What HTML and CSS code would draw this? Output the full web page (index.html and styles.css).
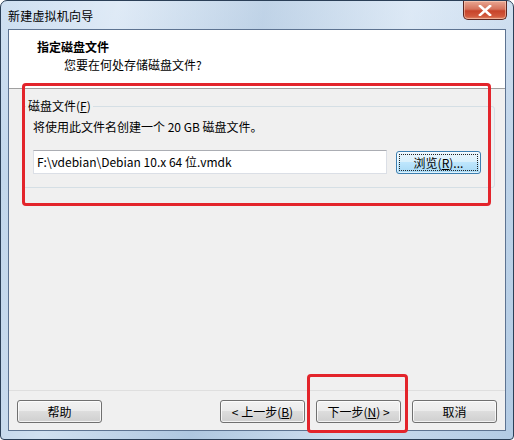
FILE: index.html
```html
<!DOCTYPE html>
<html lang="zh">
<head>
<meta charset="utf-8">
<link rel="stylesheet" href="styles.css">
</head>
<body>
<div class="window">
  <div class="titlebar">
    <span class="title">新建虚拟机向导</span>
    <button class="close" aria-label="关闭">
      <svg width="14" height="11" viewBox="0 0 14 11"><path d="M2 1 L12 10 M12 1 L2 10" stroke="#fff" stroke-width="2.6" stroke-linecap="square" fill="none"/></svg>
    </button>
  </div>
  <div class="client">
    <div class="header">
      <div class="h-title">指定磁盘文件</div>
      <div class="h-sub">您要在何处存储磁盘文件?</div>
    </div>
    <div class="body">
      <fieldset class="group">
        <legend>磁盘文件(<u>F</u>)</legend>
        <p class="desc">将使用此文件名创建一个 20 GB 磁盘文件。</p>
        <div class="row">
          <div class="input">F:\vdebian\Debian 10.x 64 位.vmdk</div>
          <button class="btn focus"><span class="focusring">浏览(<u>R</u>)...</span></button>
        </div>
      </fieldset>
      <div class="mark mark-group"></div>
    </div>
    <div class="footer">
      <button class="btn">帮助</button>
      <div class="spacer"></div>
      <button class="btn">&lt; 上一步(<u>B</u>)</button>
      <button class="btn">下一步(<u>N</u>) &gt;</button>
      <button class="btn">取消</button>
      <div class="mark mark-next"></div>
    </div>
  </div>
</div>
</body>
</html>
```
FILE: styles.css
```css
* { box-sizing: border-box; }
html, body { margin: 0; padding: 0; background: #fff; }
body {
  font-family: "Noto Sans CJK SC", "Noto Sans", sans-serif;
  font-size: 12px;
  color: #000;
}
.window {
  width: 514px;
  height: 440px;
  display: flex;
  flex-direction: column;
  padding: 0 7px 8px 7px;
  border: 1px solid #2b3f57;
  border-radius: 7px 7px 4px 4px;
  background:
    linear-gradient(100deg, rgba(255,255,255,0) 0%, rgba(255,255,255,0.35) 20%, rgba(150,175,200,0.25) 45%, rgba(255,255,255,0.3) 70%, rgba(160,185,210,0.2) 100%),
    linear-gradient(180deg, #cfe0f2 0%, #bcd3ea 40%, #b7cfe8 100%);
}
.titlebar {
  height: 28px;
  display: flex;
  align-items: flex-start;
  position: relative;
}
.title {
  margin-top: 6px;
  margin-left: 0;
  font-size: 12px;
  color: #000;
  letter-spacing: 0.2px;
}
.close {
  margin-left: auto;
  margin-right: -1px;
  width: 44px;
  height: 19px;
  border: 1px solid #5a2520;
  border-top: none;
  border-radius: 0 0 5px 5px;
  background: linear-gradient(180deg, #e9a793 0%, #d5735c 45%, #c7432a 55%, #d2593d 85%, #e08a6c 100%);
  box-shadow: inset 0 0 0 1px rgba(255,220,200,0.5);
  display: flex;
  align-items: center;
  justify-content: center;
  padding: 0;
}
.client {
  flex: 1;
  display: flex;
  flex-direction: column;
  background: #f0f0f0;
  border: 1px solid #5d7391;
}
.header {
  height: 59px;
  background: #fff;
  border-bottom: 1px solid #a0a0a0;
  padding: 8px 0 0 28px;
}
.h-title { font-weight: bold; line-height: 18px; }
.h-sub { margin-left: 27px; line-height: 18px; margin-top: 0; }
.body {
  flex: 1;
  position: relative;
  padding: 9px 10px 0 13px;
}
.group {
  margin: 0;
  padding: 0 7px 0 10px;
  border: 1px solid #d5dfe5;
  border-radius: 3px;
  height: 90px;
}
.group legend {
  padding: 0 2px 0 2px;
  margin-left: -7px;
  line-height: 16px;
}
.desc { margin: 4px 0 0 0; line-height: 18px; }
.row {
  display: flex;
  align-items: center;
  margin-top: 14px;
  gap: 9px;
}
.input {
  width: 354px;
  height: 24px;
  background: #fff;
  border: 1px solid #dbdfe6;
  border-top-color: #abadb3;
  padding: 2px 3px;
  line-height: 18px;
  white-space: nowrap;
}
.btn {
  font-family: inherit;
  font-size: 12px;
  color: #000;
  width: 85px;
  height: 23px;
  border: 1px solid #707070;
  border-radius: 3px;
  background: linear-gradient(180deg, #f2f2f2 0%, #ebebeb 49%, #dddddd 50%, #cfcfcf 100%);
  box-shadow: inset 0 0 0 1px rgba(255,255,255,0.75);
  padding: 0;
  line-height: 19px;
}
.btn.focus {
  border-color: #3c7fb1;
  background: linear-gradient(180deg, #eaf6fd 0%, #d9f0fc 49%, #bee6fd 50%, #a7d9f5 100%);
  box-shadow: inset 0 0 0 1px rgba(255,255,255,0.6);
  padding: 2px;
}
.focusring {
  display: block;
  height: 17px;
  line-height: 15px;
  border: 1px dotted #222;
}
.footer {
  height: 40px;
  border-top: 1px solid #dfdfdf;
  display: flex;
  align-items: center;
  padding: 1px 8px 0 8px;
  gap: 11px;
  position: relative;
}
.spacer { flex: 1; }
.mark {
  position: absolute;
  border: 3px solid #e3242b;
  border-radius: 4px;
  pointer-events: none;
}
.mark-group {
  left: 13px;
  top: -6px;
  width: 469px;
  height: 123px;
}
.mark-next {
  left: 298px;
  top: -17px;
  width: 101px;
  height: 59px;
}
```
